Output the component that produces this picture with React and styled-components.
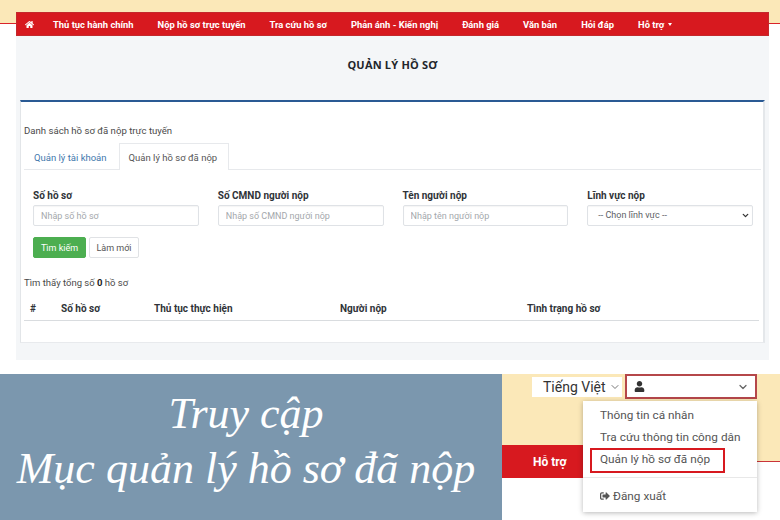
import React from "react";
import styled, { createGlobalStyle } from "styled-components";
import { FaHome, FaUser, FaSignOutAlt } from "react-icons/fa";
import { ChevronDown } from "lucide-react";

const Global = createGlobalStyle`
  html, body { margin: 0; padding: 0; background: #fff; }
  * { box-sizing: border-box; }
  body { font-family: "Roboto", "Liberation Sans", sans-serif; color: #333; }
`;

const Page = styled.div`
  width: 780px;
  height: 520px;
  overflow: hidden;
  display: flex;
  flex-direction: column;
  gap: 14px;
`;

const Shot = styled.section`
  height: 360px;
  padding: 12px 11px 0 16px;
  background: linear-gradient(#fbe8b8 0 23px, #d9232a 23px 24px, #fff 24px);
  display: flex;
  flex-direction: column;
`;

const Nav = styled.nav`
  height: 24px;
  flex: none;
  background: #d7191f;
  box-shadow: inset 0 0 0 1px #c4282c;
  color: #fff;
  display: flex;
  align-items: center;
  gap: 24px;
  padding-left: 9px;
  font-size: 9.4px;
  font-weight: 700;
  white-space: nowrap;
`;

const NavItem = styled.span`
  display: inline-flex;
  align-items: center;
  gap: 4px;
`;

const HomeItem = styled(NavItem)`
  margin-right: -5px;
`;

const Caret = styled.i`
  width: 0;
  height: 0;
  border-left: 2.5px solid transparent;
  border-right: 2.5px solid transparent;
  border-top: 3px solid #fff;
`;

const Panel = styled.div`
  flex: 1;
  background: #f4f6f8;
  padding: 0 4px 17px;
  display: flex;
  flex-direction: column;
`;

const Title = styled.h1`
  margin: 0 0 8px;
  height: 56px;
  flex: none;
  display: flex;
  align-items: center;
  justify-content: center;
  font-family: "Open Sans", sans-serif;
  font-size: 11px;
  font-weight: 700;
  color: #22252b;
  letter-spacing: 0.2px;
`;

const Card = styled.div`
  flex: 1;
  background: #fff;
  border-top: 2px solid #2a5a94;
  border-left: 1px solid #e2e5e8;
  border-right: 2px solid #e4e7ea;
  border-bottom: 1px solid #e8eaed;
  padding: 23px 2px 0 3px;
  font-size: 10px;
  color: #444;
`;

const Lead = styled.p`
  margin: 0;
  height: 18px;
  line-height: 11px;
  font-size: 9.6px;
  color: #4a4a4a;
`;

const Tabs = styled.div`
  display: flex;
  height: 27px;
  border-bottom: 1px solid #e7e9ec;
  align-items: stretch;
`;

const Tab = styled.div`
  height: 27px;
  display: flex;
  align-items: center;
  padding: 0 9px;
  font-size: 9.5px;
  margin-right: ${(p) => (p.$active ? 0 : 2)}px;
  min-width: ${(p) => (p.$active ? "110px" : "0")};
  color: ${(p) => (p.$active ? "#555" : "#3f78ad")};
  background: ${(p) => (p.$active ? "#fff" : "transparent")};
  border: 1px solid ${(p) => (p.$active ? "#e7e9ec" : "transparent")};
  border-bottom: 0;
`;

const FormGrid = styled.div`
  display: grid;
  grid-template-columns: repeat(4, 1fr);
  column-gap: 19px;
  padding: 20px 8px 0 9px;
`;

const Field = styled.label`
  display: flex;
  flex-direction: column;
  gap: 4px;
  font-size: 10px;
  font-weight: 700;
  color: #2f3338;
  line-height: 11px;
`;

const control = `
  height: 21px;
  width: 100%;
  border: 1px solid #dfe2e6;
  border-radius: 2px;
  background: #fff;
  font-family: "Roboto", sans-serif;
  font-size: 9px;
  padding: 0 7px;
  box-shadow: inset 0 1px 1px rgba(0,0,0,.04);
`;

const Input = styled.input`
  ${control}
  &::placeholder { color: #a4a8ac; opacity: 1; }
`;

const SelectBox = styled.div`
  ${control}
  display: flex;
  align-items: center;
  justify-content: space-between;
  color: #5c6066;
  font-weight: 400;
  padding: 0 2px 0 10px;
`;

const Actions = styled.div`
  display: flex;
  gap: 3px;
  padding: 11px 0 0 9px;
`;

const Button = styled.button`
  height: 21px;
  padding: 0;
  width: ${(p) => p.$w}px;
  border-radius: 2px;
  font-family: "Roboto", sans-serif;
  font-size: 9px;
  background: ${(p) => (p.$primary ? "#4cae50" : "#fff")};
  color: ${(p) => (p.$primary ? "#fff" : "#555")};
  border: 1px solid ${(p) => (p.$primary ? "#4cae50" : "#e0e2e5")};
`;

const Found = styled.p`
  margin: 19px 0 0;
  height: 11px;
  line-height: 11px;
  font-size: 9.5px;
  color: #4a4a4a;
  b { color: #222; }
`;

const TableHead = styled.div`
  display: grid;
  grid-template-columns: 31px 93px 186px 187px 1fr;
  margin: 15px 2px 0 0;
  height: 18px;
  padding: 0 0 0 6px;
  border-bottom: 1px solid #d9dcdf;
  font-size: 10px;
  font-weight: 700;
  line-height: 11px;
  color: #2f3338;
`;

const Lower = styled.section`
  height: 146px;
  flex: none;
  display: flex;
`;

const Banner = styled.div`
  width: 502px;
  background: #7b97ae;
  color: #fff;
  font-family: "Liberation Serif", serif;
  font-style: italic;
  font-size: 44px;
  line-height: 55px;
  text-align: center;
  padding: 12px 10px 0 0;
  white-space: nowrap;
`;

const Crop = styled.div`
  position: relative;
  width: 278px;
  background: linear-gradient(#fbe8b8 0 87px, #c9343a 87px 88px, #fff 88px);
  display: flex;
  flex-direction: column;
`;

const TopControls = styled.div`
  display: flex;
  gap: 3px;
  padding: 0 23px 0 30px;
  height: 71px;
  flex: none;
  align-items: flex-start;
`;

const Lang = styled.div`
  width: 90px;
  height: 20px;
  margin-top: 3px;
  background: #fff;
  display: flex;
  align-items: center;
  gap: 3px;
  padding-left: 11px;
  font-size: 14px;
  color: #333;
  white-space: nowrap;
`;

const UserBox = styled.div`
  flex: 1;
  height: 25px;
  background: #fff;
  border: 2px solid #b5474a;
  display: flex;
  align-items: center;
  justify-content: space-between;
  padding: 0 6px 0 7px;
  color: #333;
`;

const RedTab = styled.div`
  width: 81px;
  height: 33px;
  flex: none;
  background: #d7191f;
  color: #fff;
  font-size: 12px;
  font-weight: 700;
  display: flex;
  align-items: center;
  padding-left: 31px;
`;

const Menu = styled.div`
  position: absolute;
  left: 81px;
  top: 27px;
  width: 174px;
  height: 111px;
  background: #fff;
  box-shadow: 0 1px 5px rgba(0, 0, 0, 0.28);
  padding-top: 3px;
  font-size: 11.8px;
  color: #555;
`;

const MenuItem = styled.div`
  position: relative;
  height: 22px;
  display: flex;
  align-items: center;
  gap: 3px;
  padding-left: 17px;
  white-space: nowrap;
`;

const Divider = styled.div`
  height: 1px;
  background: #e8e8e8;
  margin: 7px 0 7px;
`;

const Highlight = styled.span`
  position: absolute;
  left: 7px;
  top: 0;
  width: 135px;
  height: 25px;
  border: 2px solid #d7191f;
`;

const nav = ["Thủ tục hành chính", "Nộp hồ sơ trực tuyến", "Tra cứu hồ sơ", "Phản ánh - Kiến nghị", "Đánh giá", "Văn bản", "Hỏi đáp"];

export default function App() {
  return (
    <Page>
      <Global />
      <Shot>
        <Nav>
          <HomeItem><FaHome size={9} /></HomeItem>
          {nav.map((n) => <NavItem key={n}>{n}</NavItem>)}
          <NavItem>Hỗ trợ <Caret /></NavItem>
        </Nav>
        <Panel>
          <Title>QUẢN LÝ HỒ SƠ</Title>
          <Card>
            <Lead>Danh sách hồ sơ đã nộp trực tuyến</Lead>
            <Tabs>
              <Tab>Quản lý tài khoản</Tab>
              <Tab $active>Quản lý hồ sơ đã nộp</Tab>
            </Tabs>
            <FormGrid>
              <Field>Số hồ sơ<Input placeholder="Nhập số hồ sơ" /></Field>
              <Field>Số CMND người nộp<Input placeholder="Nhập số CMND người nộp" /></Field>
              <Field>Tên người nộp<Input placeholder="Nhập tên người nộp" /></Field>
              <Field>Lĩnh vực nộp
                <SelectBox>-- Chọn lĩnh vực --<ChevronDown size={9} strokeWidth={3.5} color="#333" /></SelectBox>
              </Field>
            </FormGrid>
            <Actions>
              <Button $primary $w={53}>Tìm kiếm</Button>
              <Button $w={50}>Làm mới</Button>
            </Actions>
            <Found>Tìm thấy tổng số <b>0</b> hồ sơ</Found>
            <TableHead>
              <span>#</span>
              <span>Số hồ sơ</span>
              <span>Thủ tục thực hiện</span>
              <span>Người nộp</span>
              <span>Tình trạng hồ sơ</span>
            </TableHead>
          </Card>
        </Panel>
      </Shot>
      <Lower>
        <Banner>Truy cập<br />Mục quản lý hồ sơ đã nộp</Banner>
        <Crop>
          <TopControls>
            <Lang>Tiếng Việt <ChevronDown size={12} color="#777" /></Lang>
            <UserBox><FaUser size={11} /><ChevronDown size={12} color="#666" strokeWidth={2.5} /></UserBox>
          </TopControls>
          <RedTab>Hỗ trợ</RedTab>
          <Menu>
            <MenuItem>Thông tin cá nhân</MenuItem>
            <MenuItem>Tra cứu thông tin công dân</MenuItem>
            <MenuItem>Quản lý hồ sơ đã nộp<Highlight /></MenuItem>
            <Divider />
            <MenuItem><FaSignOutAlt size={10} /> Đăng xuất</MenuItem>
          </Menu>
        </Crop>
      </Lower>
    </Page>
  );
}
